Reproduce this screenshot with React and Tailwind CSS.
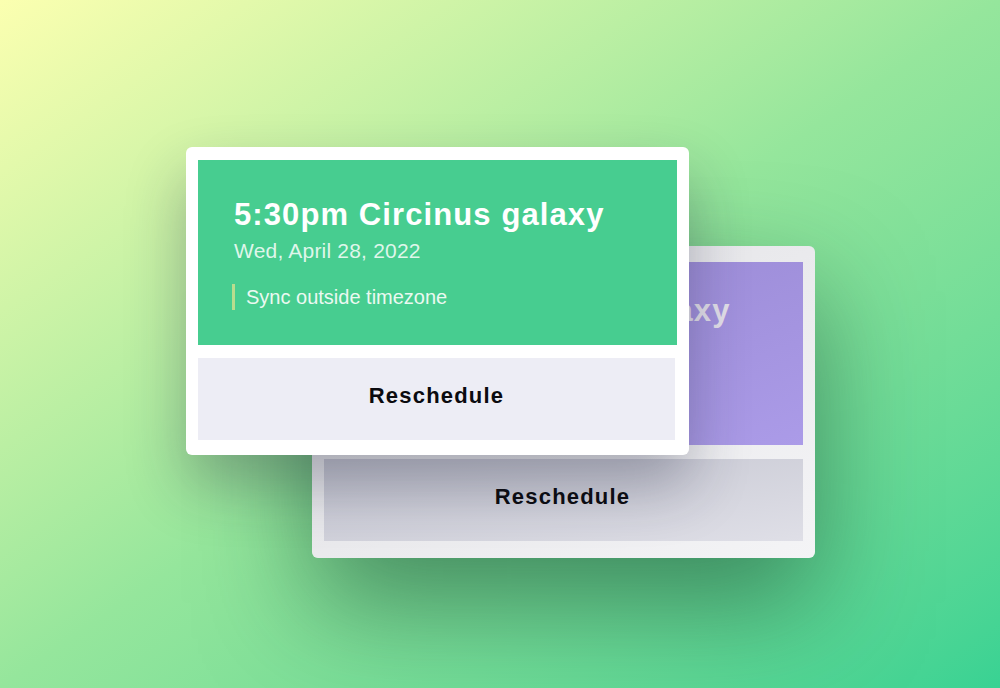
import React from "react";

const font = { fontFamily: '"Liberation Sans", Arial, sans-serif' };

function EventHeader({ tone }) {
  const back = tone === "back";
  return (
    <div
      className={
        back
          ? "h-[183px] pt-[33px] pl-[36px] bg-gradient-to-br from-[#9686d0] to-[#ab9be8]"
          : "h-[185px] pt-[39px] pl-[36px] bg-[#47cd90]"
      }
    >
      <h2
        className={`text-[31px] leading-none font-bold tracking-[1.1px] whitespace-nowrap ${
          back ? "text-[#e2dfe9]" : "text-white"
        }`}
      >
        5:30pm Circinus galaxy
      </h2>
      <p
        className={`mt-[10px] text-[21px] leading-none tracking-[0.2px] ${
          back ? "text-[#e2dfe9]/80" : "text-[#dff6ea]"
        }`}
      >
        Wed, April 28, 2022
      </p>
      <div className="mt-[23px] -ml-[2px] flex items-center gap-[11px]">
        <span className="w-[3px] h-[26px] bg-[#b9dd8e]" />
        <span
          className={`text-[20px] leading-[26px] ${
            back ? "text-[#e2dfe9]/80" : "text-[#ebf9f1]"
          }`}
        >
          Sync outside timezone
        </span>
      </div>
    </div>
  );
}

export default function App() {
  return (
    <div
      style={font}
      className="w-full h-[688px] overflow-hidden bg-gradient-to-br from-[#fbffb0] via-[#95e69c] to-[#38d293] pt-[147px] pl-[186px]"
    >
      <div className="relative w-[503px]">
        {/* back card */}
        <div className="absolute left-[126px] top-[99px] w-[503px] rounded-[6px] bg-gradient-to-br from-[#e0e0e4] to-[#f4f4f6] px-3 pt-[16px] pb-[17px] shadow-[0_45px_110px_rgba(25,80,55,0.6)]">
          <EventHeader tone="back" />
          <div className="mt-[14px] h-[82px] bg-gradient-to-br from-[#c4c5d0] to-[#dfdfe7] flex justify-center pt-[27px] pr-[2px]">
            <span className="text-[22px] leading-none font-bold tracking-[1.2px] text-[#0b0b0f]">
              Reschedule
            </span>
          </div>
        </div>

        {/* front card */}
        <div className="relative z-10 w-[503px] rounded-[6px] bg-white pt-[13px] px-3 pb-[15px] shadow-[0_30px_60px_rgba(30,35,60,0.32)]">
          <EventHeader tone="front" />
          <div className="mt-[13px] mr-[2px] h-[82px] bg-[#ededf5] flex justify-center pt-[27px]">
            <span className="text-[22px] leading-none font-bold tracking-[1.2px] text-[#0b0b0f]">
              Reschedule
            </span>
          </div>
        </div>
      </div>
    </div>
  );
}
